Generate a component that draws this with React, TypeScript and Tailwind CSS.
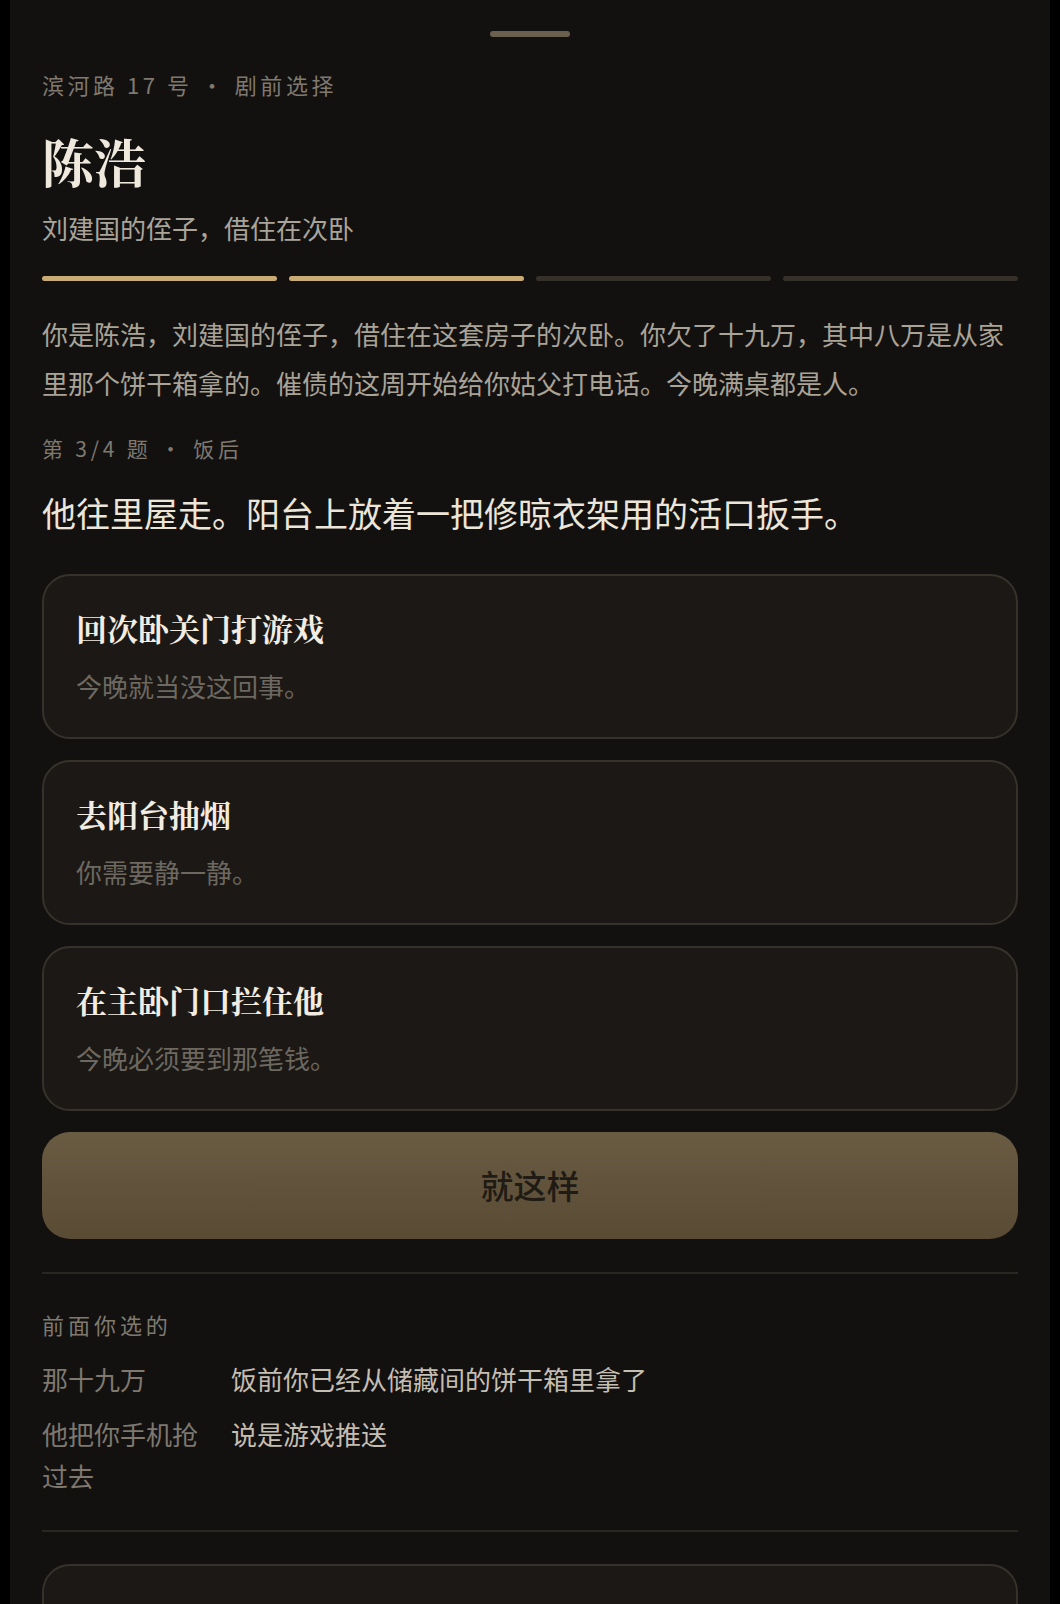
const sans = '"Noto Sans CJK SC", "Noto Sans", sans-serif';
const serif = '"Noto Serif CJK SC", "Noto Serif SC", "Source Han Serif SC", "Noto Sans CJK SC", serif';

type Choice = { title: string; note: string };

const choices: Choice[] = [
  { title: '回次卧关门打游戏', note: '今晚就当没这回事。' },
  { title: '去阳台抽烟', note: '你需要静一静。' },
  { title: '在主卧门口拦住他', note: '今晚必须要到那笔钱。' },
];

const history = [
  { q: '那十九万', a: '饭前你已经从储藏间的饼干箱里拿了' },
  { q: '他把你手机抢过去', a: '说是游戏推送' },
];

function ChoiceCard({ choice }: { choice: Choice }) {
  return (
    <div className="rounded-[28px] border-2 border-[#36322b] bg-[#1b1815] px-8 pt-[28px] pb-8">
      <div
        className="text-[31px] leading-[48px] font-bold text-[#f2ece2]"
        style={{ fontFamily: serif }}
      >
        {choice.title}
      </div>
      <div className="mt-[14px] text-[26px] leading-[39px] text-[#6d6860]">{choice.note}</div>
    </div>
  );
}

export default function App() {
  const step = 2;

  return (
    <div className="min-h-screen bg-black flex justify-center" style={{ fontFamily: sans }}>
      <div className="w-[1040px] bg-[#131110] px-8 pt-[31px] pb-10">
        <div className="mx-auto h-[6px] w-20 rounded-full bg-[#6b604d]" />

        <div className="mt-[31px] text-[22px] leading-[33px] tracking-[0.16em] text-[#7f796f]">
          滨河路 17 号 · 剧前选择
        </div>

        <h1
          className="mt-[27px] text-[52px] leading-[65px] font-bold text-[#eee8dd]"
          style={{ fontFamily: serif }}
        >
          陈浩
        </h1>
        <div className="mt-[15px] text-[26px] leading-[39px] text-[#aaa49a]">
          刘建国的侄子，借住在次卧
        </div>

        <div className="mt-[29px] grid grid-cols-4 gap-3">
          {[0, 1, 2, 3].map((i) => (
            <div
              key={i}
              className={`h-[5px] rounded-full ${i < step ? 'bg-[#c9ab74]' : 'bg-[#36302a]'}`}
            />
          ))}
        </div>

        <p className="mt-[28px] text-[26px] leading-[1.9] text-[#a9a398]">
          你是陈浩，刘建国的侄子，借住在这套房子的次卧。你欠了十九万，其中八万是从家里那个饼干箱拿的。催债的这周开始给你姑父打电话。今晚满桌都是人。
        </p>

        <div className="mt-[24px] text-[21px] leading-[33px] tracking-[0.18em] text-[#7f796f]">
          第 3/4 题 · 饭后
        </div>

        <div className="mt-[22px] text-[34px] leading-[51px] text-[#ece6da]">
          他往里屋走。阳台上放着一把修晾衣架用的活口扳手。
        </div>

        <div className="mt-[36px] flex flex-col gap-[21px]">
          {choices.map((c) => (
            <ChoiceCard key={c.title} choice={c} />
          ))}
        </div>

        <button className="mt-[21px] flex h-[107px] w-full items-center justify-center rounded-[28px] bg-gradient-to-b from-[#6a5c43] to-[#594b34] text-[33px] font-medium text-[#201b15]">
          就这样
        </button>

        <div className="mt-[33px] h-[2px] bg-[#2a2723]" />

        <div className="mt-[34px] text-[22px] leading-[33px] tracking-[0.18em] text-[#7f796f]">
          前面你选的
        </div>

        <div className="mt-[17px] flex flex-col gap-[14px]">
          {history.map((h) => (
            <div key={h.q} className="grid grid-cols-[172px_1fr] gap-[17px] text-[26px] leading-[1.6]">
              <div className="text-[#7e786f]">{h.q}</div>
              <div className="text-[#c5beb3]">{h.a}</div>
            </div>
          ))}
        </div>

        <div className="mt-[33px] h-[2px] bg-[#2a2723]" />

        <div className="mt-[32px]">
          <ChoiceCard choice={{ title: '我接那一伙', note: '说点什么。' }} />
        </div>
      </div>
    </div>
  );
}
